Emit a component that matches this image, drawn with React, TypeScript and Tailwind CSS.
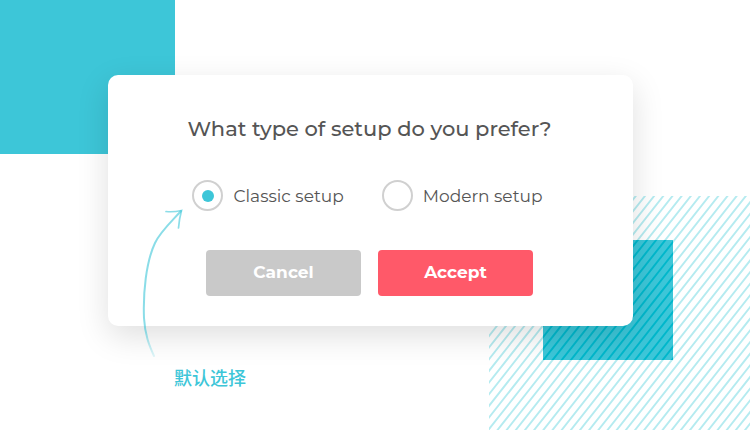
import React from 'react'

interface SetupOption {
  value: string
  label: string
}

const options: SetupOption[] = [
  { value: 'classic', label: 'Classic setup' },
  { value: 'modern', label: 'Modern setup' }
]

// Diagonal lines across the 261x234 hatched area
const stripes = Array.from({ length: 49 }, (_, i) => {
  const x = i * 9.17
  return `M${x + 4} -5L${x - 188} 239`
}).join('')

const Backdrop: React.FC = () => (
  <div className="absolute inset-0 overflow-hidden" aria-hidden="true">
    <div className="absolute left-0 top-0 h-[154px] w-[175px] bg-[#3dc6d8]" />
    <svg className="absolute left-[489px] top-[196px] h-[234px] w-[261px]">
      <defs>
        <clipPath id="square">
          <rect x="54" y="44" width="130" height="120" />
        </clipPath>
      </defs>
      <path d={stripes} stroke="#b5ebf0" strokeWidth="1.9" />
      <rect x="54" y="44" width="130" height="120" fill="#3dc6d8" />
      <path d={stripes} stroke="#00b7cb" strokeWidth="1.9" clipPath="url(#square)" />
    </svg>
  </div>
)

const HintArrow: React.FC = () => (
  <svg
    viewBox="0 0 50 155"
    fill="none"
    stroke="#3dc6d8"
    strokeLinecap="round"
    className="absolute left-[138px] top-[205px] h-[155px] w-[50px]"
    aria-hidden="true"
  >
    <defs>
      <linearGradient id="tail" x1="0" y1="0" x2="0" y2="155" gradientUnits="userSpaceOnUse">
        <stop offset="0" stopColor="#3dc6d8" stopOpacity="0.6" />
        <stop offset="0.8" stopColor="#3dc6d8" stopOpacity="0.6" />
        <stop offset="1" stopColor="#3dc6d8" stopOpacity="0.1" />
      </linearGradient>
    </defs>
    <path d="M43 6C33 17 22 27 17 38C8 57 5 88 6 113C7 130 11 140 16 151" stroke="url(#tail)" strokeWidth="2" />
    <path d="M28 6.5C33 7 39 6.5 43.5 5.5C42 11 41 17 40.5 23" strokeOpacity="0.6" strokeWidth="1.7" />
  </svg>
)

const App: React.FC = () => {
  const [setup, setSetup] = React.useState('classic')

  return (
    <main className="relative min-h-screen bg-white pl-[108px] pr-[117px] pt-[75px] font-[Montserrat,Gotham,Lato,'Noto_Sans_CJK_SC',sans-serif] text-[#555]">
      <Backdrop />

      <form
        onSubmit={(e) => e.preventDefault()}
        className="relative mx-auto w-full max-w-[525px] rounded-[10px] bg-white pb-[30px] pl-4 pr-[18px] pt-10 shadow-[0_10px_32px_rgba(0,0,0,0.13)]"
      >
        <fieldset>
          <legend className="w-full text-center text-[21px] leading-7 font-medium">
            What type of setup do you prefer?
          </legend>
          <div className="mt-[37px] flex justify-center gap-[38px] pr-1">
            {options.map((option) => (
              <label key={option.value} className="flex items-center gap-[10px] text-[17px] leading-6">
                <input
                  type="radio"
                  name="setup"
                  value={option.value}
                  checked={setup === option.value}
                  onChange={() => setSetup(option.value)}
                  className="grid size-[31px] appearance-none place-items-center rounded-full border-2 border-[#d0d0d0] bg-white before:size-3 before:rounded-full checked:before:bg-[#3dc6d8]"
                />
                {option.label}
              </label>
            ))}
          </div>
        </fieldset>

        <div className="mt-[39px] flex justify-center gap-[17px] text-[17px] font-bold text-white">
          <button type="button" className="h-[46px] w-[155px] rounded bg-[#c9c9c9]">
            Cancel
          </button>
          <button type="submit" className="h-[46px] w-[155px] rounded bg-[#ff5969]">
            Accept
          </button>
        </div>
      </form>

      {/* Callout for the preselected option */}
      <HintArrow />
      <p className="absolute left-[174px] top-[367px] text-[18px] leading-6 font-medium text-[#3dc6d8]">默认选择</p>
    </main>
  )
}

export default App
